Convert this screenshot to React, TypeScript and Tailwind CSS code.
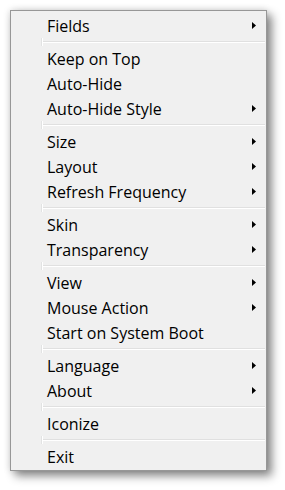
import React from 'react';

type Entry = { label: string; sub?: boolean } | 'sep';

const entries: Entry[] = [
  { label: 'Fields', sub: true },
  'sep',
  { label: 'Keep on Top' },
  { label: 'Auto-Hide' },
  { label: 'Auto-Hide Style', sub: true },
  'sep',
  { label: 'Size', sub: true },
  { label: 'Layout', sub: true },
  { label: 'Refresh Frequency', sub: true },
  'sep',
  { label: 'Skin', sub: true },
  { label: 'Transparency', sub: true },
  'sep',
  { label: 'View', sub: true },
  { label: 'Mouse Action', sub: true },
  { label: 'Start on System Boot' },
  'sep',
  { label: 'Language', sub: true },
  { label: 'About', sub: true },
  'sep',
  { label: 'Iconize' },
  'sep',
  { label: 'Exit' },
];

// small black submenu triangle
const Arrow = () => (
  <svg width="4" height="7" viewBox="0 0 4 7" className="block">
    <path d="M0 0 L4 3.5 L0 7 Z" fill="#000" />
  </svg>
);

const Separator = () => (
  <div className="h-[8px] flex">
    <div className="w-[30px]" />
    <div className="w-px bg-[#e2e3e3]" />
    <div className="w-px bg-white" />
    <div className="flex-1 flex flex-col pt-[3px] pr-[1px]">
      <div className="h-px bg-[#e0e0e0]" />
      <div className="h-px bg-white" />
    </div>
  </div>
);

export default function App() {
  return (
    <div className="w-[285px] h-[490px] bg-white pt-[10px] pl-[10px]" style={{ fontFamily: '"Open Sans", "Noto Sans", sans-serif' }}>
      <div className="w-[257px] border border-[#979797] bg-[#f0f0f0] pt-[2px] pb-[1px] shadow-[5px_5px_9px_rgba(0,0,0,0.45),0_0_7px_rgba(0,0,0,0.15)]">
        {entries.map((e, i) =>
          e === 'sep' ? (
            <Separator key={i} />
          ) : (
            <div key={i} className="h-[25px] flex items-center pl-[36px] pr-[10px] text-[16px] text-black">
              <span className="flex-1 leading-none">{e.label}</span>
              {e.sub && <Arrow />}
            </div>
          )
        )}
      </div>
    </div>
  );
}
